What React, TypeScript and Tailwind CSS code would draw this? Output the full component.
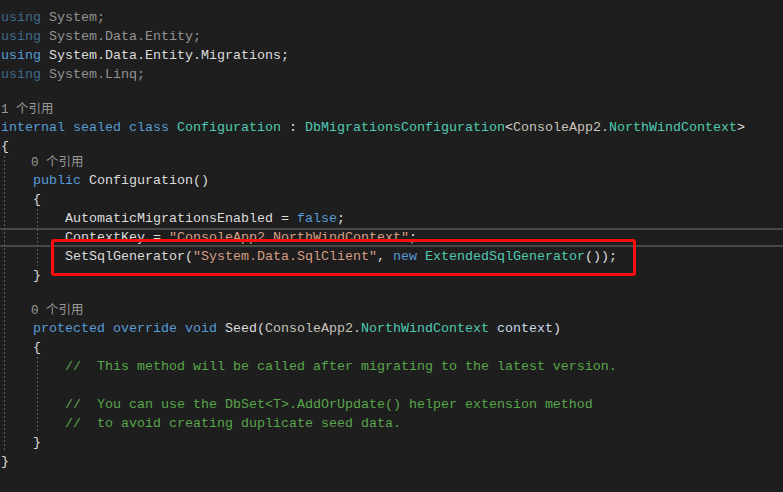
import React from 'react';

type Tok = [string, string];

const K = 'text-[#569cd6]';
const T = 'text-[#dcdcdc]';
const TY = 'text-[#4ec9b0]';
const S = 'text-[#d69d85]';
const C = 'text-[#57a64a]';
const NS = 'text-[#c8c3b8]';
const P = 'text-[#c9d9ea]';
const DK = 'text-[#406a8c]';
const DT = 'text-[#929292]';

const Row = ({ t, children }: { t?: Tok[]; children?: React.ReactNode }) => (
  <div className="relative h-[19px] whitespace-pre text-[13.33px] leading-[19px]">
    {children}
    <span className="relative">
      {(t ?? []).map(([txt, cls], j) => (
        <span key={j} className={cls}>
          {txt}
        </span>
      ))}
    </span>
  </div>
);

const Lens = ({ text }: { text: string }) => (
  <div className="h-[15px] whitespace-pre text-[12.5px] leading-[15px] text-[#999999]">{text}</div>
);

// block with a dashed indent guide running down its left side
const Guided = ({ at, children }: { at: 'outer' | 'inner'; children: React.ReactNode }) => (
  <div className="relative">
    {children}
    <div
      className={`absolute inset-y-0 w-px bg-[repeating-linear-gradient(to_bottom,#5e5e5e_0_2px,transparent_2px_4px)] ${
        at === 'outer' ? 'left-[3px]' : 'left-[36px]'
      }`}
    />
  </div>
);

export default function App() {
  return (
    <div className="min-h-screen w-full overflow-hidden bg-[#1e1e1e]">
      <div className="pt-[7.5px] pl-px font-['Liberation_Mono','Noto_Sans_CJK_SC',monospace]">
        <Row t={[['using', DK], [' System;', DT]]} />
        <Row t={[['using', DK], [' System.Data.Entity;', DT]]} />
        <Row t={[['using', K], [' System.Data.Entity.Migrations;', T]]} />
        <Row t={[['using', DK], [' System.Linq;', DT]]} />
        <Row />
        <Lens text="1 个引用" />
        <Row
          t={[
            ['internal sealed class', K],
            [' ', T],
            ['Configuration', TY],
            [' : ', T],
            ['DbMigrationsConfiguration', TY],
            ['<', T],
            ['ConsoleApp2.', NS],
            ['NorthWindContext', TY],
            ['>', T],
          ]}
        />
        <Row t={[['{', T]]} />
        <Guided at="outer">
          <Lens text="    0 个引用" />
          <Row t={[['    ', T], ['public', K], [' Configuration()', T]]} />
          <Row t={[['    {', T]]} />
          <Guided at="inner">
            <Row t={[['        AutomaticMigrationsEnabled = ', T], ['false', K], [';', T]]} />
            <Row t={[['        ContextKey = ', T], ['"ConsoleApp2.NorthWindContext"', S], [';', T]]}>
              <div className="absolute inset-0 -left-px border-y-2 border-[#474747]" />
            </Row>
            <Row
              t={[
                ['        SetSqlGenerator(', T],
                ['"System.Data.SqlClient"', S],
                [', ', T],
                ['new', K],
                [' ', T],
                ['ExtendedSqlGenerator', TY],
                ['());', T],
              ]}
            >
              <div className="absolute left-[50px] -top-[7.5px] z-10 h-[37px] w-[585px] rounded-[3px] border-[3px] border-[#fd0d0d]" />
            </Row>
          </Guided>
          <Row t={[['    }', T]]} />
          <Row />
          <Lens text="    0 个引用" />
          <Row
            t={[
              ['    ', T],
              ['protected override void', K],
              [' Seed(', T],
              ['ConsoleApp2.', NS],
              ['NorthWindContext', TY],
              [' context', P],
              [')', T],
            ]}
          />
          <Row t={[['    {', T]]} />
          <Guided at="inner">
            <Row t={[['        //  This method will be called after migrating to the latest version.', C]]} />
            <Row />
            <Row t={[['        //  You can use the DbSet<T>.AddOrUpdate() helper extension method', C]]} />
            <Row t={[['        //  to avoid creating duplicate seed data.', C]]} />
          </Guided>
          <Row t={[['    }', T]]} />
        </Guided>
        <Row t={[['}', T]]} />
      </div>
    </div>
  );
}
